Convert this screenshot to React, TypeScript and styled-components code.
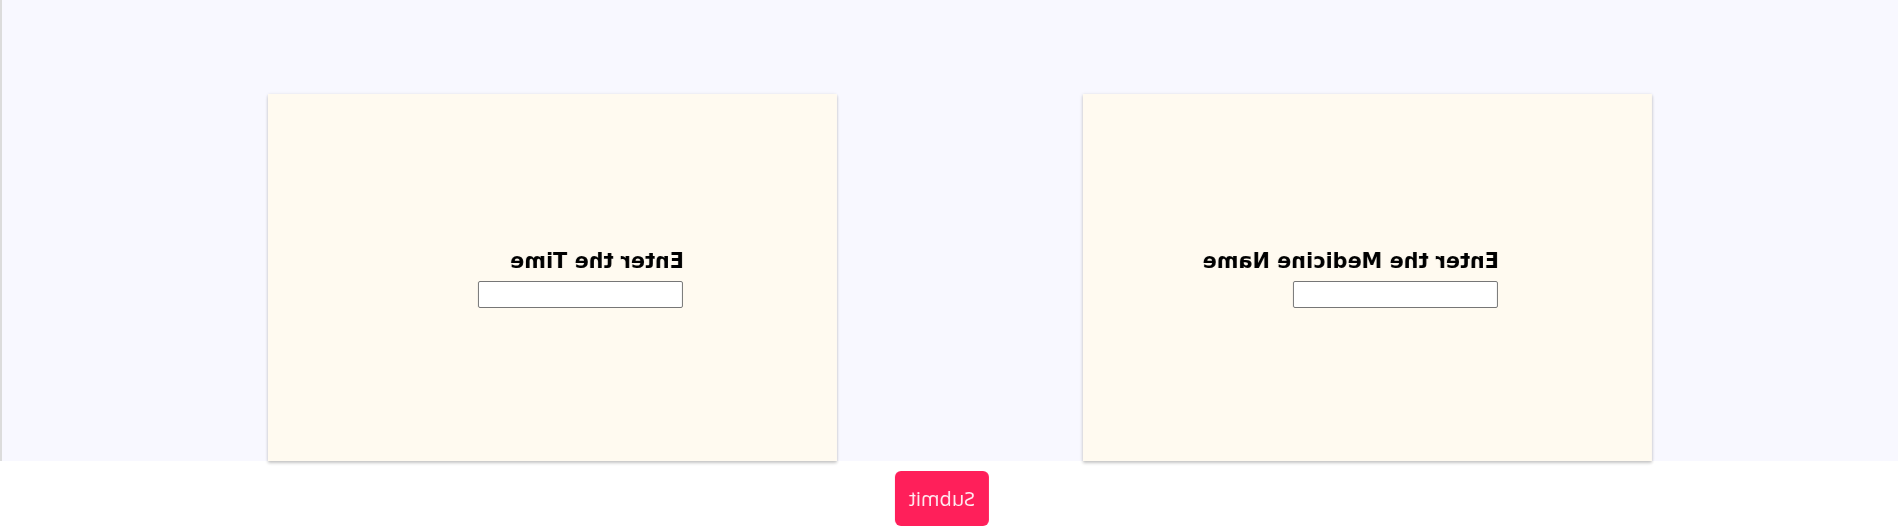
import React from "react";
import styled, { createGlobalStyle } from "styled-components";

const GlobalStyle = createGlobalStyle`
  html, body {
    margin: 0;
    padding: 0;
    background: #ffffff;
  }
  body {
    font-family: "Liberation Sans", Arial, sans-serif;
  }
`;

const Mirror = styled.div`
  width: 100%;
  transform: scaleX(-1);
`;

const Stage = styled.section`
  box-sizing: border-box;
  height: 461px;
  display: flex;
  gap: 246px;
  padding: 94px 0 0 246px;
  background: #f8f8ff;
  border-right: 2px solid #dcdcdc;
`;

const Card = styled.div`
  box-sizing: border-box;
  width: 569px;
  height: 367px;
  display: flex;
  flex-direction: column;
  justify-content: center;
  align-items: flex-start;
  padding: 3px 0 0 153px;
  background: #fffaf0;
  box-shadow: 0 2px 3px rgba(0, 0, 0, 0.22), 0 0 3px rgba(0, 0, 0, 0.08);
`;

const Label = styled.label`
  display: block;
  margin: 0 0 8px;
  font-family: "DejaVu Sans", Verdana, sans-serif;
  font-weight: bold;
  font-size: 20.8px;
  line-height: 23px;
  color: #000;
`;

const TextInput = styled.input`
  box-sizing: border-box;
  width: 205px;
  height: 27px;
  margin: 0 0 0 1px;
  padding: 1px 4px;
  border: 1px solid #767676;
  border-radius: 2px;
  background: #ffffff;
  font-size: 18px;
`;

const Footer = styled.div`
  display: flex;
  justify-content: center;
  padding: 10px 0 0 14px;
`;

const SubmitButton = styled.button`
  box-sizing: border-box;
  width: 94px;
  height: 55px;
  padding: 0;
  border: none;
  border-radius: 6px;
  background: #ff1f5a;
  color: #fff0f4;
  font-family: "Open Sans", "Liberation Sans", sans-serif;
  font-weight: 500;
  font-size: 20px;
  cursor: pointer;
`;

type FieldProps = { label: string; id: string };

const FieldCard = ({ label, id }: FieldProps) => (
  <Card>
    <Label htmlFor={id}>{label}</Label>
    <TextInput id={id} type="text" />
  </Card>
);

export default function App() {
  return (
    <>
      <GlobalStyle />
      <Mirror>
        <Stage>
          <FieldCard id="medicine" label="Enter the Medicine Name" />
          <FieldCard id="time" label="Enter the Time" />
        </Stage>
        <Footer>
          <SubmitButton type="button">Submit</SubmitButton>
        </Footer>
      </Mirror>
    </>
  );
}
